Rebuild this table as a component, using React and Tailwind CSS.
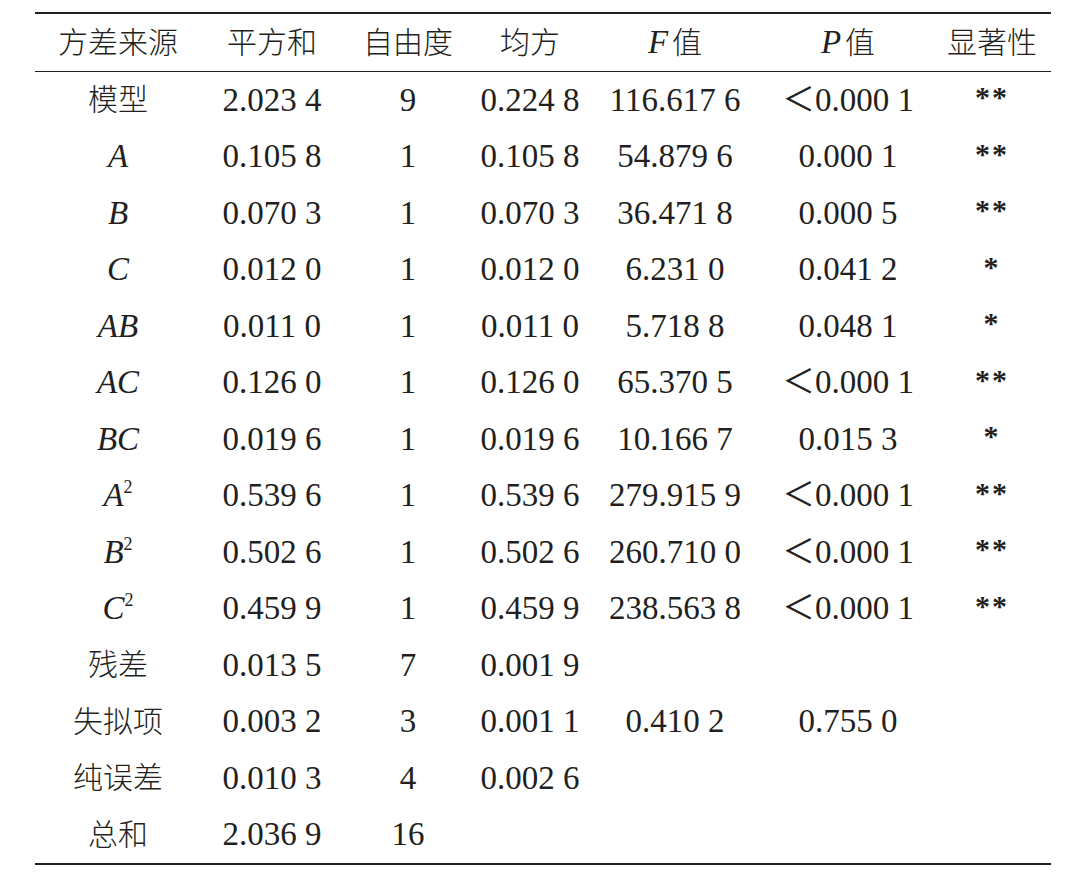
import React from "react";

const Sq = ({ v }) => (
  <span>
    <i>{v}</i>
    <sup className="text-[18px] -top-[13px]">2</sup>
  </span>
);

const rows = [
  { src: "模型", cjk: true, ss: "2.023 4", df: "9", ms: "0.224 8", f: "116.617 6", p: "＜0.000 1", sig: "**" },
  { src: <i>A</i>, ss: "0.105 8", df: "1", ms: "0.105 8", f: "54.879 6", p: "0.000 1", sig: "**" },
  { src: <i>B</i>, ss: "0.070 3", df: "1", ms: "0.070 3", f: "36.471 8", p: "0.000 5", sig: "**" },
  { src: <i>C</i>, ss: "0.012 0", df: "1", ms: "0.012 0", f: "6.231 0", p: "0.041 2", sig: "*" },
  { src: <i>AB</i>, ss: "0.011 0", df: "1", ms: "0.011 0", f: "5.718 8", p: "0.048 1", sig: "*" },
  { src: <i>AC</i>, ss: "0.126 0", df: "1", ms: "0.126 0", f: "65.370 5", p: "＜0.000 1", sig: "**" },
  { src: <i>BC</i>, ss: "0.019 6", df: "1", ms: "0.019 6", f: "10.166 7", p: "0.015 3", sig: "*" },
  { src: <Sq v="A" />, ss: "0.539 6", df: "1", ms: "0.539 6", f: "279.915 9", p: "＜0.000 1", sig: "**" },
  { src: <Sq v="B" />, ss: "0.502 6", df: "1", ms: "0.502 6", f: "260.710 0", p: "＜0.000 1", sig: "**" },
  { src: <Sq v="C" />, ss: "0.459 9", df: "1", ms: "0.459 9", f: "238.563 8", p: "＜0.000 1", sig: "**" },
  { src: "残差", cjk: true, ss: "0.013 5", df: "7", ms: "0.001 9", f: "", p: "", sig: "" },
  { src: "失拟项", cjk: true, ss: "0.003 2", df: "3", ms: "0.001 1", f: "0.410 2", p: "0.755 0", sig: "" },
  { src: "纯误差", cjk: true, ss: "0.010 3", df: "4", ms: "0.002 6", f: "", p: "", sig: "" },
  { src: "总和", cjk: true, ss: "2.036 9", df: "16", ms: "", f: "", p: "", sig: "" },
];

const cols = "grid grid-cols-[166px_142px_130px_114px_176px_170px_118px]";

const App = () => {
  return (
    <div
      className="w-[1066px] h-[876px] bg-white text-[#231f20] text-[33px] leading-none pt-[12px] pl-[35px]"
      style={{ fontFamily: '"Liberation Serif", "Noto Sans CJK SC", serif' }}
    >
      <div className="w-[1016px] border-t-2 border-b-2 border-[#231f20]">
        <div className={`${cols} h-[58px] items-center text-center border-b border-[#231f20] text-[30px] font-light`}>
          <div>方差来源</div>
          <div>平方和</div>
          <div>自由度</div>
          <div>均方</div>
          <div><i className="font-normal text-[33px] mr-[4px]">F</i>值</div>
          <div><i className="font-normal text-[33px] mr-[4px]">P</i>值</div>
          <div>显著性</div>
        </div>
        {rows.map((r, i) => (
          <div key={i} className={`${cols} h-[56.5px] items-center text-center`}>
            <div className={r.cjk ? "text-[30px] font-light" : ""}>{r.src}</div>
            <div>{r.ss}</div>
            <div>{r.df}</div>
            <div>{r.ms}</div>
            <div>{r.f}</div>
            <div>{r.p}</div>
            <div className="text-[30px] font-semibold tracking-[2px] self-start pt-[10px]">{r.sig}</div>
          </div>
        ))}
      </div>
    </div>
  );
};

export default App;
